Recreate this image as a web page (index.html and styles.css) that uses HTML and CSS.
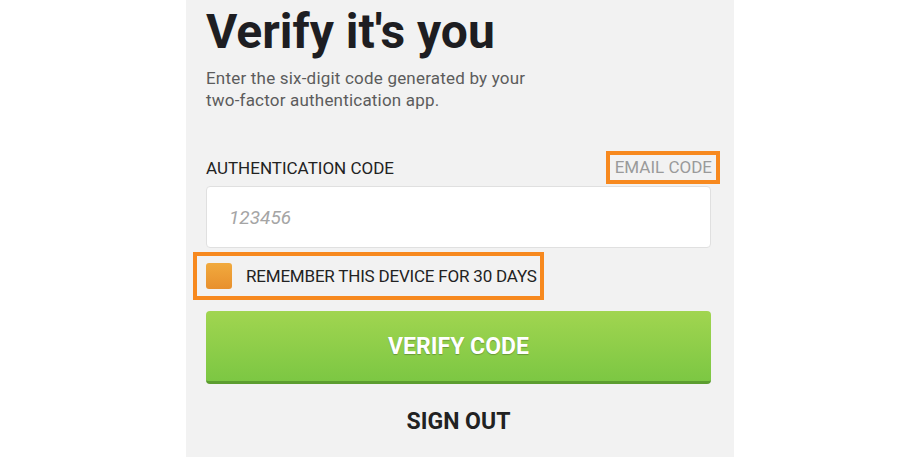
FILE: index.html
```html
<!DOCTYPE html>
<html lang="en">
<head>
<meta charset="utf-8">
<title>Verify it's you</title>
<link rel="stylesheet" href="styles.css">
</head>
<body>
<main class="panel">
  <h1 class="title">Verify it's you</h1>
  <p class="subtitle">Enter the six-digit code generated by your<br>two-factor authentication app.</p>
  <div class="label-row">
    <label class="label" for="code">AUTHENTICATION CODE</label>
    <a class="email-code highlight">EMAIL CODE</a>
  </div>
  <input id="code" class="code-input" type="text" placeholder="123456">
  <div class="remember highlight">
    <span class="checkbox"></span>
    <span class="remember-text">REMEMBER THIS DEVICE FOR 30 DAYS</span>
  </div>
  <button class="verify">VERIFY CODE</button>
  <a class="signout">SIGN OUT</a>
</main>
</body>
</html>
```
FILE: styles.css
```css
* { box-sizing: border-box; }
html, body { margin: 0; padding: 0; background: #fff; }
body { font-family: "Roboto", "Noto Sans", sans-serif; }
.panel {
  width: 548px;
  height: 457px;
  margin: 0 auto;
  background: #f2f2f2;
  padding: 0 23px 0 20px;
  display: flex;
  flex-direction: column;
}
.title {
  margin: 6px 0 0;
  font-size: 48px;
  line-height: 52px;
  font-weight: 700;
  color: #1e1e22;
}
.subtitle {
  margin: 9px 0 0;
  font-size: 17px;
  line-height: 22px;
  color: #5c5c5c;
  letter-spacing: 0.2px;
}
.label-row {
  margin-top: 40px;
  display: flex;
  justify-content: space-between;
  align-items: center;
  height: 33px;
}
.label {
  font-size: 17px;
  color: #222;
}
.highlight { border: 4px solid #f7891f; }
.email-code {
  font-size: 17px;
  color: #9a9a9a;
  padding: 0 4px 0 5px;
  height: 33px;
  line-height: 25px;
  margin-right: -9px;
}
.code-input {
  margin-top: 2px;
  height: 62px;
  width: 100%;
  border: 1px solid #e0e0e0;
  border-radius: 4px;
  background: #fff;
  padding: 0 22px;
  font-family: inherit;
  font-size: 19px;
  outline: none;
}
.code-input::placeholder { color: #a5a5a5; font-style: italic; }
.remember {
  margin: 4px 0 0 -13px;
  width: 351px;
  height: 48px;
  display: flex;
  align-items: center;
  padding-left: 9px;
}
.checkbox {
  flex: 0 0 26px;
  width: 26px;
  height: 26px;
  border-radius: 3px;
  background: linear-gradient(#f1aa3e, #e8902d);
}
.remember-text {
  margin-left: 14px;
  font-size: 17px;
  color: #222;
  white-space: nowrap;
  letter-spacing: -0.2px;
}
.verify {
  margin-top: 11px;
  height: 73px;
  width: 100%;
  border: 0;
  border-bottom: 3px solid #5c9d30;
  border-radius: 4px;
  background: linear-gradient(#a1d550, #7cc743);
  color: #fff;
  font-family: inherit;
  font-weight: 700;
  font-size: 23px;
  text-shadow: 0 1px 1px rgba(0,0,0,0.25);
}
.signout {
  margin-top: 24px;
  align-self: center;
  font-size: 23px;
  font-weight: 700;
  color: #222;
}
```
